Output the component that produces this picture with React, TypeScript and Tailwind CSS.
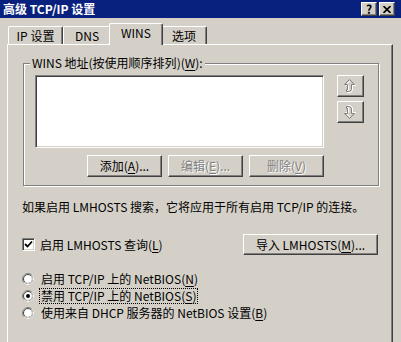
import React from 'react';

const font = "font-['Noto_Sans_CJK_SC','Noto_Sans',sans-serif]";

const raised =
  'border border-t-white border-l-white border-r-[#404040] border-b-[#404040] shadow-[inset_-1px_-1px_0_#808080] bg-[#d4d0c8]';
const sunken =
  'border border-t-[#808080] border-l-[#808080] border-r-white border-b-white shadow-[inset_1px_1px_0_#404040,inset_-1px_-1px_0_#d4d0c8] bg-white';

function Btn({
  children,
  w,
  disabled,
}: {
  children: React.ReactNode;
  w: string;
  disabled?: boolean;
}) {
  return (
    <div
      className={`${raised} ${w} flex items-center justify-center text-[12px] leading-[14px] ${
        disabled ? 'text-[#808080] [text-shadow:1px_1px_0_#fff]' : 'text-black'
      }`}
    >
      {children}
    </div>
  );
}

function U({ children }: { children: React.ReactNode }) {
  return <span className="underline underline-offset-2">{children}</span>;
}

// up / down arrow with a kinked shaft, drawn greyed out like the original
function Arrow({ down }: { down?: boolean }) {
  const d = 'M5.5 0.5 L10.5 5.5 L7.5 5.5 L7.5 10.5 L5.5 12.5 L2.5 12.5 L2.5 10.5 L3.5 10.5 L3.5 5.5 L0.5 5.5 Z';
  return (
    <svg width="13" height="15" viewBox="0 0 13 15">
      <g transform={down ? 'translate(0 14) scale(1 -1)' : undefined}>
        <path d={d} transform="translate(1 1)" fill="none" stroke="#fff" />
        <path d={d} fill="none" stroke="#808080" />
      </g>
    </svg>
  );
}

function Radio({ on }: { on?: boolean }) {
  return (
    <svg width="12" height="12" viewBox="0 0 12 12" className="shrink-0">
      <circle cx="6" cy="6" r="5.5" fill="#fff" stroke="#808080" />
      <path d="M9.9 2.1 A5.5 5.5 0 0 1 2.1 9.9" fill="none" stroke="#fff" />
      <circle cx="6" cy="6" r="4.5" fill="none" stroke="#404040" />
      <path d="M9.2 2.8 A4.5 4.5 0 0 1 2.8 9.2" fill="none" stroke="#d4d0c8" />
      {on && <circle cx="6" cy="6" r="2" fill="#000" />}
    </svg>
  );
}

function Tab({ label, active }: { label: string; active?: boolean }) {
  return (
    <div
      className={`flex items-start justify-center rounded-t-[2px] border-t border-l border-r border-t-white border-l-white border-r-[#404040] shadow-[inset_-1px_0_0_#808080] bg-[#d4d0c8] text-[12px] leading-[14px] ${
        active
          ? 'relative z-10 -mx-[2px] -mb-px h-[22px] pt-[2px]'
          : 'h-[18px] pt-[2px]'
      }`}
    >
      {label}
    </div>
  );
}

export default function App() {
  return (
    <div className={`w-[401px] h-[342px] overflow-hidden bg-[#d4d0c8] text-black ${font}`}>
      {/* title bar */}
      <div className="h-[18px] bg-[#08217e] flex items-center justify-between pl-[3px] pr-[6px]">
        <span className="text-white font-bold text-[12px] leading-[14px]">高级 TCP/IP 设置</span>
        <div className="flex gap-[2px]">
          <div className={`${raised} w-[16px] h-[14px] flex items-center justify-center text-[12px] font-bold leading-[12px]`}>
            ?
          </div>
          <div className={`${raised} w-[16px] h-[14px] flex items-center justify-center`}>
            <svg width="8" height="7" viewBox="0 0 8 7">
              <path d="M0.5 0 L7.5 7 M7.5 0 L0.5 7" stroke="#000" strokeWidth="1.6" />
            </svg>
          </div>
        </div>
      </div>

      <div className="pl-[7px] pr-[8px] pt-[6px]">
        {/* tabs */}
        <div className="flex items-end h-[20px] pl-px">
          <div className="w-[55px] flex flex-col justify-end"><Tab label="IP 设置" /></div>
          <div className="w-[48px] flex flex-col justify-end"><Tab label="DNS" /></div>
          <div className="w-[50px] flex flex-col justify-end"><Tab label="WINS" active /></div>
          <div className="w-[46px] flex flex-col justify-end"><Tab label="选项" /></div>
        </div>

        {/* panel */}
        <div className="h-[320px] border-t border-l border-r border-t-white border-l-white border-r-[#404040] shadow-[inset_-1px_0_0_#808080] pl-[15px] pr-[13px] pt-[18px]">
          {/* group box */}
          <div className="relative h-[123px] border border-[#808080] shadow-[inset_1px_1px_0_#fff,1px_1px_0_#fff] pl-[11px] pt-[11px]">
            <span className="absolute -top-[8px] left-[6px] bg-[#d4d0c8] px-[2px] text-[12px] leading-[14px]">
              WINS 地址(按使用顺序排列)(<U>W</U>):
            </span>
            <div className="flex items-start">
              <div className="flex flex-col">
                <div className={`${sunken} w-[289px] h-[73px]`} />
                <div className="flex justify-end gap-[6px] mt-[7px]">
                  <Btn w="w-[75px] h-[22px]">
                    添加(<U>A</U>)...
                  </Btn>
                  <Btn w="w-[75px] h-[22px]" disabled>
                    编辑(<U>E</U>)...
                  </Btn>
                  <Btn w="w-[75px] h-[22px]" disabled>
                    删除(<U>V</U>)
                  </Btn>
                </div>
              </div>
              <div className="flex flex-col gap-[4px] ml-[13px]">
                <div className={`${raised} w-[27px] h-[22px] flex items-center justify-center`}>
                  <Arrow />
                </div>
                <div className={`${raised} w-[27px] h-[22px] flex items-center justify-center`}>
                  <Arrow down />
                </div>
              </div>
            </div>
          </div>

          <p className="mt-[14px] -ml-px text-[12px] leading-[14px] whitespace-nowrap">
            如果启用 LMHOSTS 搜索，它将应用于所有启用 TCP/IP 的连接。
          </p>

          <div className="flex items-center justify-between mt-[20px] pr-px">
            <div className="flex items-center gap-[5px] -ml-px">
              <div className={`${sunken} w-[13px] h-[13px] flex items-center justify-center`}>
                <svg width="9" height="9" viewBox="0 0 9 9">
                  <path d="M1 4 L3.5 6.5 L8 1.5" fill="none" stroke="#000" strokeWidth="1.8" />
                </svg>
              </div>
              <span className="text-[12px] leading-[14px]">
                启用 LMHOSTS 查询(<U>L</U>)
              </span>
            </div>
            <Btn w="w-[135px] h-[21px]">
              导入 LMHOSTS(<U>M</U>)...
            </Btn>
          </div>

          <div className="mt-[15px] flex flex-col -ml-px">
            <div className="flex items-center h-[17px] gap-[5px]">
              <Radio />
              <span className="text-[12px] leading-[14px] px-px border border-transparent">
                启用 TCP/IP 上的 NetBIOS(<U>N</U>)
              </span>
            </div>
            <div className="flex items-center h-[17px] gap-[5px]">
              <Radio on />
              <span className="text-[12px] leading-[14px] px-px border border-dotted border-black">
                禁用 TCP/IP 上的 NetBIOS(<U>S</U>)
              </span>
            </div>
            <div className="flex items-center h-[18px] gap-[5px]">
              <Radio />
              <span className="text-[12px] leading-[14px] px-px border border-transparent">
                使用来自 DHCP 服务器的 NetBIOS 设置(<U>B</U>)
              </span>
            </div>
          </div>
        </div>
      </div>
    </div>
  );
}
